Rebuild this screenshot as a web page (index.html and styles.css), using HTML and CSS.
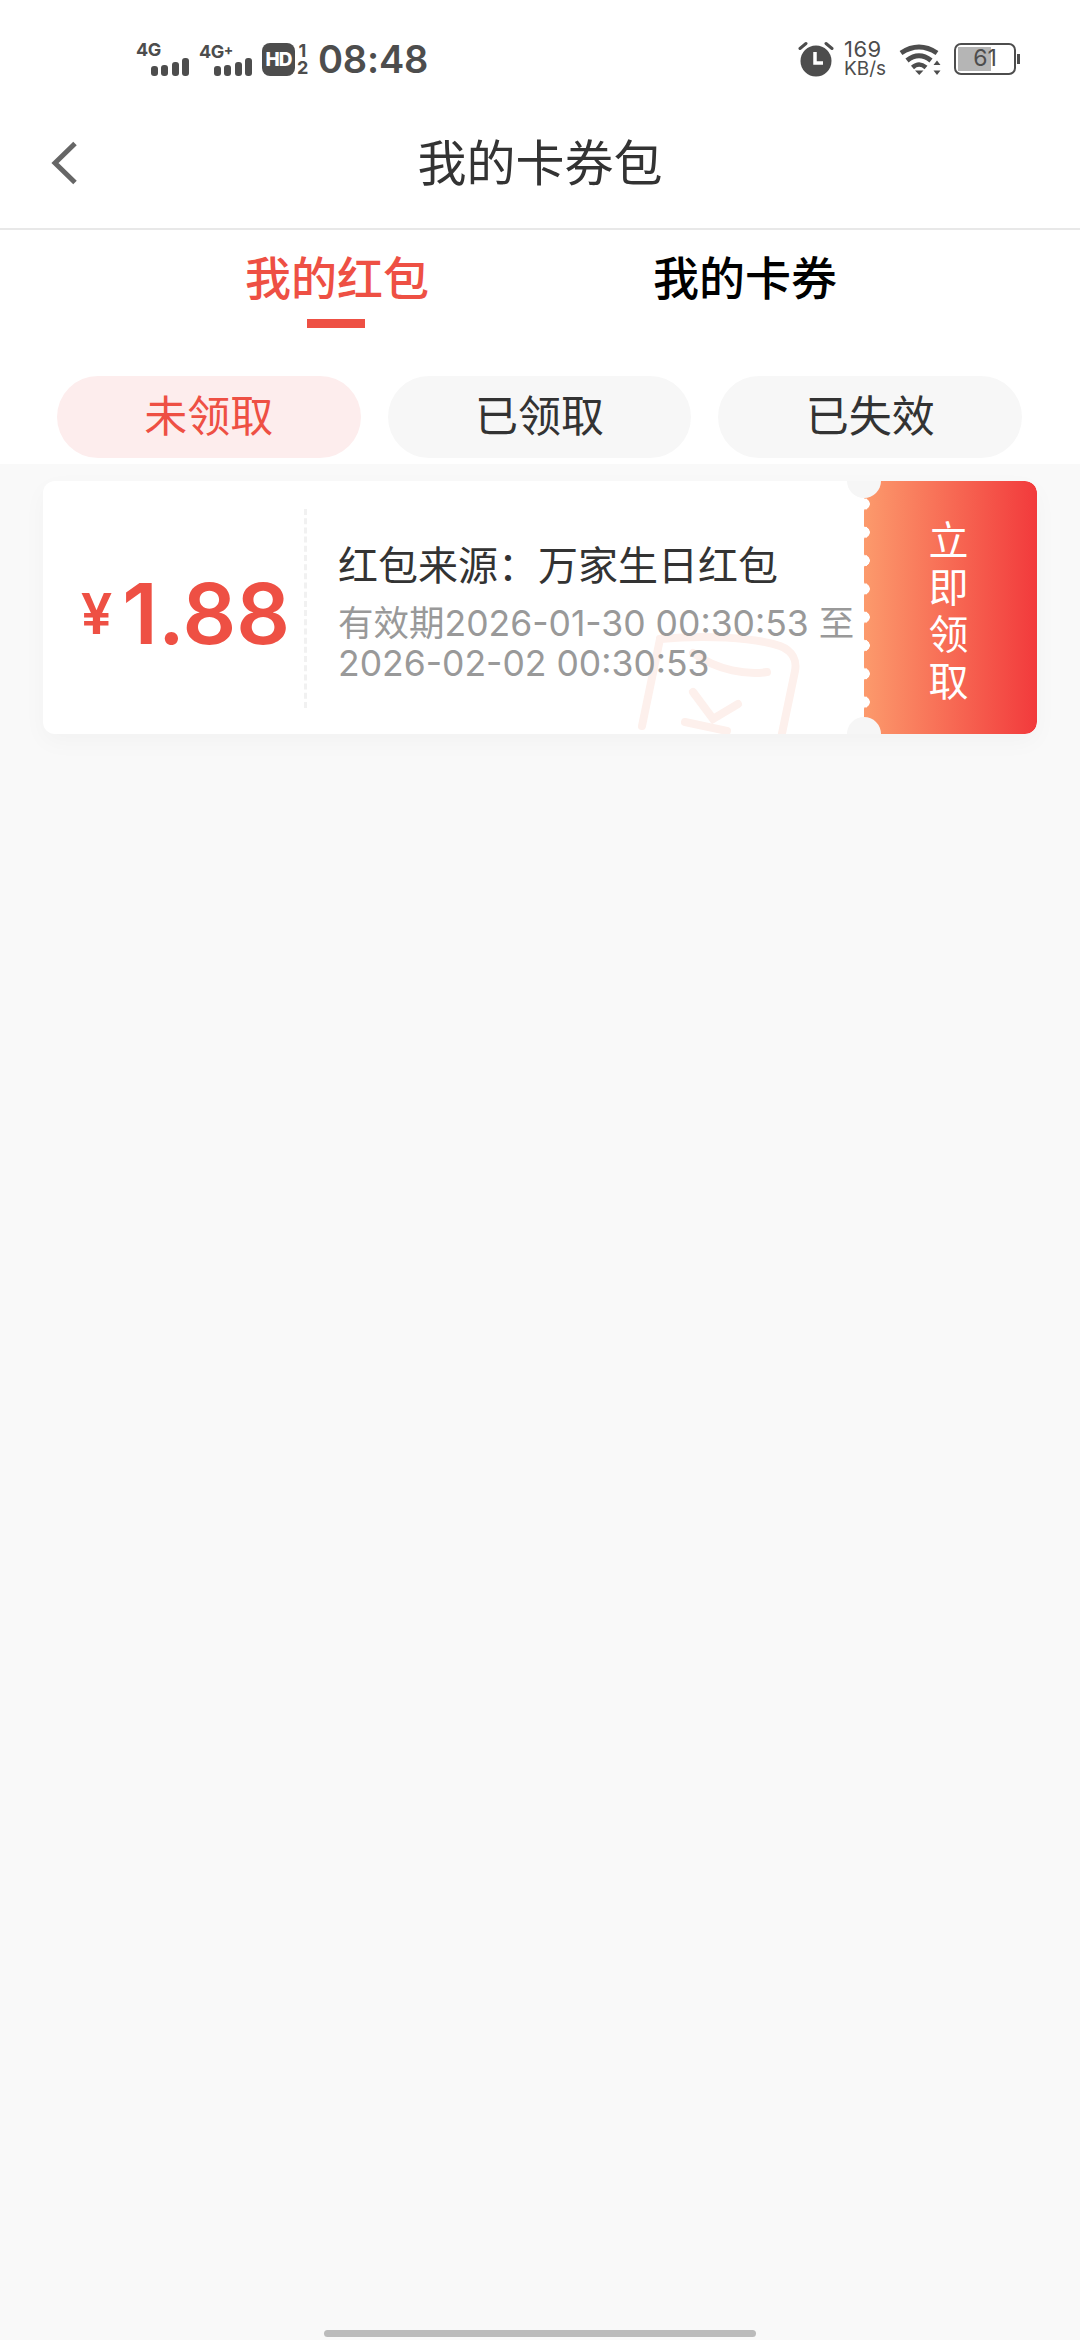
FILE: index.html
```html
<!DOCTYPE html>
<html lang="zh-CN">
<head>
    <meta charset="UTF-8">
    <meta name="viewport" content="width=device-width, initial-scale=1.0">
    <title>我的卡券包</title>
    <link rel="stylesheet" href="styles.css">
</head>
<body>
    <div class="page">
        <!-- Status bar -->
        <div class="status-bar">
            <div class="status-left">
                <div class="signal">
                    <span class="signal-label">4G</span>
                    <div class="bars"><i class="b1"></i><i class="b2"></i><i class="b3"></i><i class="b4"></i></div>
                </div>
                <div class="signal">
                    <span class="signal-label">4G<span class="plus">+</span></span>
                    <div class="bars"><i class="b1"></i><i class="b2"></i><i class="b3"></i><i class="b4"></i></div>
                </div>
                <div class="hd-badge">HD</div>
                <div class="sim-nums"><span>1</span><span>2</span></div>
                <div class="clock">08:48</div>
            </div>
            <div class="status-right">
                <svg class="alarm" width="36" height="36" viewBox="0 0 36 36">
                    <circle cx="18" cy="20" r="15.500" fill="#4d4d4d"/>
                    <path d="M17 11v11h8" fill="none" stroke="#fff" stroke-width="3.500"/>
                    <path d="M2 7.500l6-5M34 7.500l-6-5" stroke="#4d4d4d" stroke-width="3" stroke-linecap="round"/>
                </svg>
                <div class="speed"><span>169</span><span>KB/s</span></div>
                <svg class="wifi" width="44" height="34" viewBox="0 0 44 34">
                    <path d="M2 11Q20 -1 38 11" fill="none" stroke="#4d4d4d" stroke-width="5"/>
                    <path d="M8 18.500Q20 9 32 18.500" fill="none" stroke="#4d4d4d" stroke-width="5"/>
                    <path d="M13.500 25.500Q20 19.500 27 25.500" fill="none" stroke="#4d4d4d" stroke-width="4.500"/>
                    <path d="M16 28.500h8.500l-4.250 4.500z" fill="#4d4d4d"/>
                    <path d="M38 18.500l3.500 4.500h-7zM38 33l3.500-4.500h-7z" fill="#4d4d4d"/>
                </svg>
                <div class="battery">
                    <div class="battery-body">
                        <div class="battery-fill"></div>
                        <span class="battery-num">61</span>
                    </div>
                    <div class="battery-cap"></div>
                </div>
            </div>
        </div>

        <!-- Title -->
        <div class="title-bar">
            <svg class="back" width="30" height="46" viewBox="0 0 30 46">
                <path d="M26 3.500L6 23l20 19.500" fill="none" stroke="#666" stroke-width="5"/>
            </svg>
            <h1>我的卡券包</h1>
        </div>

        <!-- Tabs -->
        <div class="tabs">
            <div class="tab active">我的红包</div>
            <div class="tab">我的卡券</div>
        </div>

        <div class="filters">
            <div class="pill active">未领取</div>
            <div class="pill">已领取</div>
            <div class="pill">已失效</div>
        </div>

        <!-- Coupon list -->
        <div class="list">
            <div class="coupon">
                <div class="amount"><span class="yen">¥</span>1.88</div>
                <div class="info">
                    <div class="source">红包来源：万家生日红包</div>
                    <div class="dates">有效期2026-01-30 00:30:53 至 2026-02-02 00:30:53</div>
                </div>
                <svg class="watermark" width="170" height="103" viewBox="0 0 170 103">
                    <g fill="none" stroke="#fdf0ec" stroke-width="8" stroke-linecap="round">
                        <path d="M9 95L27 8"/>
                        <path d="M27 8C70 4 120 6 147 15C160 20 164 30 162 40L147 112"/>
                        <path d="M60 22C85 40 115 44 134 41"/>
                        <path d="M60 61L80 88L105 73"/>
                        <path d="M52 91L94 100"/>
                    </g>
                </svg>
                <div class="claim"><span>立</span><span>即</span><span>领</span><span>取</span></div>
                <div class="notch notch-top"></div>
                <div class="notch notch-bottom"></div>
            </div>
        </div>

        <div class="home-bar"></div>
    </div>
</body>
</html>
```

FILE: styles.css
```css
/* General Styles */
* {
    margin: 0;
    padding: 0;
    box-sizing: border-box;
}

body {
    font-family: "Inter", "Noto Sans CJK SC", sans-serif;
    background: #f9f9f9;
    color: #333;
}

.page {
    width: 1080px;
    height: 2340px;
    display: flex;
    flex-direction: column;
    position: relative;
    overflow: hidden;
}

/* Status bar */
.status-bar {
    height: 118px;
    background: #fff;
    display: flex;
    justify-content: space-between;
    align-items: center;
    padding: 0 60px 0 136px;
    color: #4d4d4d;
}

.status-left,
.status-right {
    display: flex;
    align-items: center;
}

.signal {
    width: 54px;
    margin-right: 9px;
    height: 33px;
    position: relative;
}

.signal-label {
    font-size: 18px;
    font-weight: 700;
    line-height: 14px;
    letter-spacing: -0.500px;
    display: block;
}

.plus {
    font-size: 14px;
    vertical-align: 3px;
}

.bars {
    position: absolute;
    right: 1px;
    bottom: 0;
    display: flex;
    align-items: flex-end;
    gap: 3.500px;
}

.bars i {
    width: 7px;
    background: #4d4d4d;
    border-radius: 3px;
}

.bars .b1 { height: 10px; }
.bars .b2 { height: 11px; }
.bars .b3 { height: 14px; }
.bars .b4 { height: 18px; }

.hd-badge {
    width: 33px;
    height: 33px;
    background: #4d4d4d;
    border-radius: 8px;
    color: #fff;
    font-size: 19px;
    font-weight: 800;
    letter-spacing: -1px;
    text-align: center;
    line-height: 33px;
}

.sim-nums {
    display: flex;
    flex-direction: column;
    width: 11px;
    font-size: 18px;
    font-weight: 700;
    line-height: 17px;
    text-align: center;
    margin: 0 10px 0 2px;
}

.clock {
    font-size: 38px;
    font-weight: 600;
    letter-spacing: -0.200px;
}

.alarm {
    margin-right: 10px;
}

.speed {
    display: flex;
    flex-direction: column;
    font-size: 19px;
    line-height: 19px;
    width: 55px;
}

.speed span:first-child {
    font-size: 22px;
    letter-spacing: 0.500px;
}

.wifi {
    margin-right: 11px;
}

.battery {
    display: flex;
    align-items: center;
}

.battery-body {
    width: 62px;
    height: 32px;
    border: 2.500px solid #4d4d4d;
    border-radius: 7px;
    position: relative;
    overflow: hidden;
    text-align: center;
    padding: 2px;
}

.battery-fill {
    width: 61%;
    height: 100%;
    background: #b5b5b5;
}

.battery-num {
    position: absolute;
    left: 0;
    right: 0;
    top: 0;
    font-size: 23px;
    line-height: 27px;
}

.battery-cap {
    width: 3px;
    height: 10px;
    margin-left: 1px;
    background: #4d4d4d;
}

/* Title bar */
.title-bar {
    height: 112px;
    background: #fff;
    border-bottom: 2px solid #e8e8e8;
    padding-bottom: 20px;
    display: flex;
    align-items: center;
    justify-content: center;
    position: relative;
}

.title-bar h1 {
    font-size: 49px;
    font-weight: 400;
    color: #333;
    margin-bottom: 8px;
}

.back {
    position: absolute;
    left: 49px;
}

/* Tabs */
.tabs {
    height: 98px;
    background: #fff;
    display: flex;
    padding-left: 245px;
    gap: 224px;
}

.tab {
    font-size: 46px;
    font-weight: 500;
    color: #000;
    width: 184px;
    padding-top: 12px;
    white-space: nowrap;
    position: relative;
}

.tab.active {
    color: #ee5044;
}

.tab.active::after {
    content: "";
    position: absolute;
    left: 62px;
    bottom: 0;
    width: 58px;
    height: 9px;
    background: #ee5044;
}

/* Filter pills */
.filters {
    height: 136px;
    background: #fff;
    display: flex;
    gap: 27px;
    padding: 48px 58px 0 57px;
}

.pill {
    flex: 1;
    height: 82px;
    border-radius: 41px;
    background: #f7f7f7;
    font-size: 43px;
    line-height: 80px;
    text-align: center;
    color: #333;
}

.pill.active {
    background: #fdeded;
    color: #ee5044;
}

/* Coupon */
.list {
    flex: 1;
    padding: 17px 43px 0;
}

.coupon {
    height: 253px;
    background: #fff;
    border-radius: 12px;
    box-shadow: 0 8px 24px rgba(0, 0, 0, 0.03);
    display: flex;
    position: relative;
    overflow: hidden;
}

.amount {
    width: 264px;
    margin: 28px 0 26px;
    border-right: 3px dashed #f1f1f1;
    display: flex;
    align-items: center;
    justify-content: flex-end;
    padding: 10px 14px 0 0;
    color: #ee5044;
    font-size: 84px;
    font-weight: 600;
}

.yen {
    font-size: 56px;
    font-weight: 600;
    margin-right: 10px;
}

.info {
    width: 557px;
    padding: 57px 0 0 31px;
    position: relative;
    z-index: 1;
}

.source {
    font-size: 40px;
    line-height: 56px;
    color: #333;
}

.dates {
    font-size: 35.500px;
    line-height: 40px;
    margin-top: 10px;
    color: #999;
}

.watermark {
    position: absolute;
    left: 590px;
    top: 150px;
}

.claim {
    flex: 1;
    background-image:
        radial-gradient(circle at 0 50%, #fff 5.500px, transparent 6px),
        linear-gradient(90deg, #fc9a6c, #f23a3c);
    background-size: 8px 28.300px, 100% 100%;
    background-repeat: repeat-y, no-repeat;
    background-position: 0 8.850px, 0 0;
    border-radius: 0 12px 12px 0;
    color: #fff;
    font-size: 40px;
    display: flex;
    flex-direction: column;
    align-items: center;
    justify-content: center;
    padding: 7px 4px 0 0;
    position: relative;
}

.claim span {
    line-height: 47px;
}

.notch {
    position: absolute;
    left: 804px;
    width: 34px;
    height: 34px;
    border-radius: 50%;
    background: #f6f6f6;
}

.notch-top {
    top: -17px;
}

.notch-bottom {
    bottom: -17px;
}

.home-bar {
    position: absolute;
    left: 324px;
    bottom: 3px;
    width: 432px;
    height: 7px;
    border-radius: 4px;
    background: #bbb;
}
```
